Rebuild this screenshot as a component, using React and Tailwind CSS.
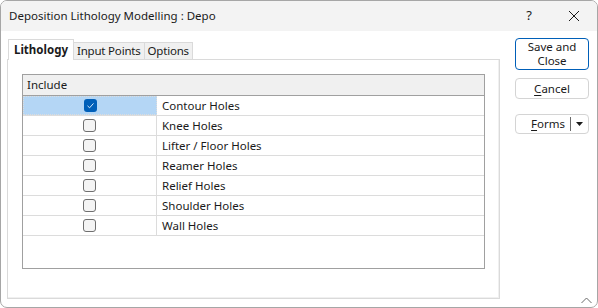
const ROWS = [
  { name: 'Contour Holes', checked: true },
  { name: 'Knee Holes' },
  { name: 'Lifter / Floor Holes' },
  { name: 'Reamer Holes' },
  { name: 'Relief Holes' },
  { name: 'Shoulder Holes' },
  { name: 'Wall Holes' },
]

function Checkbox({ checked }) {
  if (checked) {
    return (
      <div className="w-[13px] h-[13px] rounded-[3px] bg-[#005fb8] flex items-center justify-center">
        <svg width="9" height="9" viewBox="0 0 9 9">
          <polyline points="1.5,4.8 3.6,6.8 7.5,2.4" fill="none" stroke="#d8eaf9" strokeWidth="1" />
        </svg>
      </div>
    )
  }
  return <div className="w-[13px] h-[13px] rounded-[3px] border border-[#6f6f6f] bg-[#f4f4f4]" />
}

export default function App() {
  return (
    <div
      className="relative w-[598px] h-[308px] bg-white border border-[#a6a6a6] rounded-[7px] overflow-hidden flex flex-col text-[11.5px] text-[#1a1a1a]"
      style={{ fontFamily: '"Noto Sans", "Liberation Sans", sans-serif' }}
    >
      {/* Title bar */}
      <div className="h-[30px] bg-[#f3f3f3] flex items-center shrink-0">
        <span className="pl-[8px] flex-1">Deposition Lithology Modelling : Depo</span>
        <span className="w-[12px] text-center mr-[33px] text-[13px]">?</span>
        <svg width="12" height="12" viewBox="0 0 12 12" className="mr-[17px]">
          <path d="M1 1 L11 11 M11 1 L1 11" stroke="#1a1a1a" strokeWidth="1" />
        </svg>
      </div>

      {/* Body */}
      <div className="flex flex-1 pl-[6px] pt-[8px]">
        <div className="w-[493px] flex flex-col">
          {/* Tabs */}
          <div className="flex items-end h-[21px] pl-[1px] relative z-10">
            <div className="h-[21px] px-[5px] border border-b-0 border-[#dadada] bg-white font-bold flex items-center pb-[1px]">
              Lithology
            </div>
            <div className="h-[18px] px-[3px] tracking-[-0.2px] border border-l-0 border-[#dadada] bg-[#f0f0f0] flex items-center">
              Input Points
            </div>
            <div className="h-[18px] px-[3px] tracking-[-0.2px] border border-l-0 border-[#dadada] bg-[#f0f0f0] flex items-center">
              Options
            </div>
          </div>
          {/* Panel */}
          <div className="-mt-[1px] h-[240px] border border-[#dadada] shadow-[inset_-1px_-1px_0_#f0f0f0] pl-[14px] pt-[14px]">
            <div className="w-[463px] h-[195px] border border-[#a0a0a0] bg-white flex flex-col">
              <div className="h-[21px] bg-[#f0f0f0] border-b border-[#a0a0a0] flex items-center pl-[4px]">
                Include
              </div>
              {ROWS.map((r, i) => (
                <div key={i} className="h-[20px] flex border-b border-[#dcdcdc]">
                  <div
                    className={`w-[134px] flex items-center justify-center border-r border-[#dcdcdc] ${
                      r.checked ? 'bg-[#b4d6f5] border-[#6a6a6a] border-dotted border' : ''
                    }`}
                  >
                    <Checkbox checked={r.checked} />
                  </div>
                  <div className="flex items-center pl-[5px]">{r.name}</div>
                </div>
              ))}
            </div>
          </div>
        </div>

        {/* Buttons */}
        <div className="ml-[15px] w-[74px] -mt-[1px] flex flex-col">
          <div className="h-[32px] border border-[#005fb8] rounded-[4px] flex flex-col items-center justify-center leading-[14px]">
            <span>Save and</span>
            <span>Close</span>
          </div>
          <div className="mt-[8px] h-[21px] border border-[#d4d4d4] rounded-[4px] flex items-center justify-center">
            <span>
              <span className="underline underline-offset-2">C</span>ancel
            </span>
          </div>
          <div className="mt-[15px] h-[20px] border border-[#d4d4d4] rounded-[4px] flex items-center justify-end">
            <span>
              <span className="underline underline-offset-2">F</span>orms
            </span>
            <div className="ml-[5px] w-px h-[14px] bg-[#6a6a6a]" />
            <svg width="7" height="4" viewBox="0 0 7 4" className="mx-[5px]">
              <path d="M0 0 L7 0 L3.5 4 Z" fill="#1a1a1a" />
            </svg>
          </div>
        </div>
      </div>

      {/* Resize grip */}
      <svg width="11" height="7" viewBox="0 0 11 7" className="absolute right-[5px] bottom-[3px]">
        <polyline points="0.5,6 5.5,1 10.5,6" fill="none" stroke="#6a6a6a" strokeWidth="1" />
      </svg>
    </div>
  )
}
